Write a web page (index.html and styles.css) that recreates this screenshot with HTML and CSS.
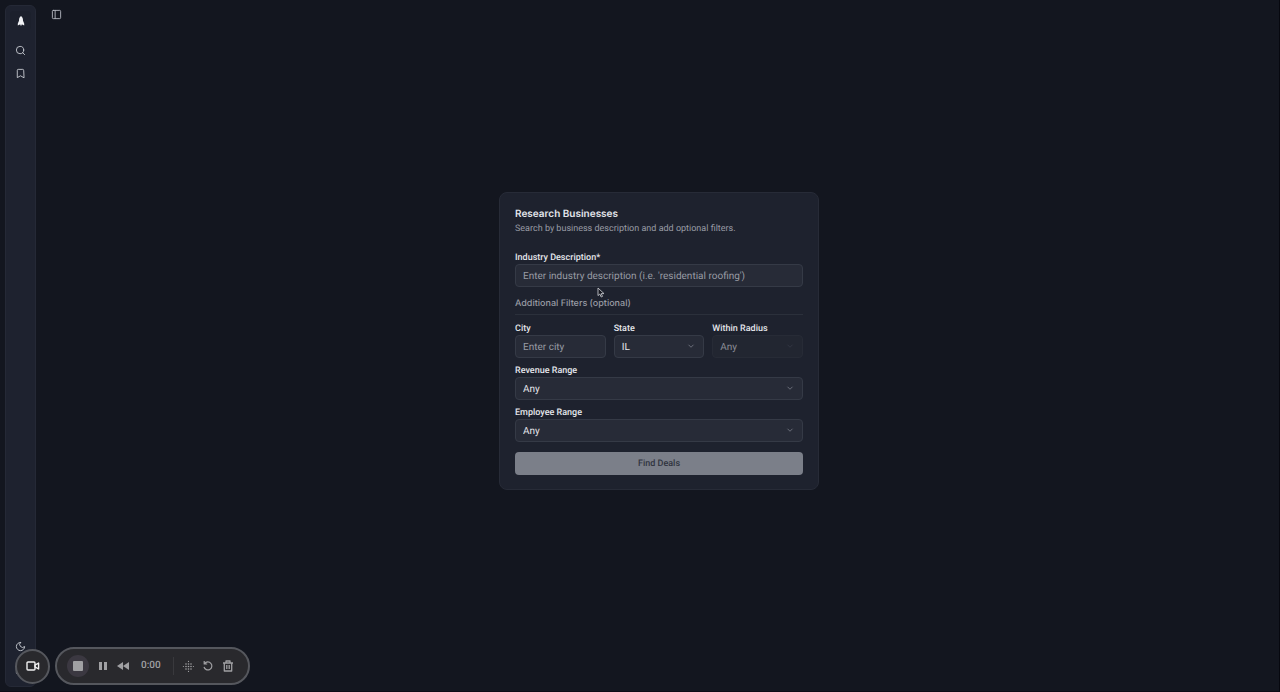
FILE: index.html
```html
<!DOCTYPE html>
<html lang="en">
<head>
  <meta charset="UTF-8" />
  <meta name="viewport" content="width=device-width, initial-scale=1.0"/>
  <title>Research Businesses</title>
  <link rel="stylesheet" href="styles.css">
</head>
<body>
  <div class="app">
    <aside class="sidebar">
      <nav class="sidebar-nav">
        <a href="#" class="brand" aria-label="Home">
          <svg width="12" height="12" viewBox="0 0 12 12" fill="currentColor">
            <path d="M6 1C4.4 2.2 4 3.8 4 5.8L2.8 8.6V10.4L4.8 9.6H5.4V10.6H6.6V9.6H7.2L9.2 10.4V8.6L8 5.8C8 3.8 7.6 2.2 6 1z"></path>
          </svg>
        </a>
        <a href="#" class="nav-link" aria-label="Search">
          <svg class="icon" width="11" height="11" viewBox="0 0 24 24">
            <circle cx="11" cy="11" r="8"></circle>
            <line x1="21" y1="21" x2="16.7" y2="16.7"></line>
          </svg>
        </a>
        <a href="#" class="nav-link" aria-label="Saved">
          <svg class="icon" width="11" height="11" viewBox="0 0 24 24">
            <path d="M19 21l-7-4-7 4V5a2 2 0 0 1 2-2h10a2 2 0 0 1 2 2z"></path>
          </svg>
        </a>
      </nav>
      <div class="sidebar-footer">
        <button class="nav-link" aria-label="Toggle theme">
          <svg class="icon" width="11" height="11" viewBox="0 0 24 24">
            <path d="M12 3a6 6 0 0 0 9 9 9 9 0 1 1-9-9z"></path>
          </svg>
        </button>
        <button class="nav-link" aria-label="Account">
          <svg class="icon" width="11" height="11" viewBox="0 0 24 24">
            <rect x="3" y="3" width="18" height="18" rx="2"></rect>
          </svg>
        </button>
      </div>
    </aside>

    <div class="content">
      <header class="topbar">
        <button class="toggle" aria-label="Toggle sidebar">
          <svg class="icon" width="11" height="11" viewBox="0 0 24 24">
            <rect x="3" y="3" width="18" height="18" rx="2"></rect>
            <line x1="9" y1="3" x2="9" y2="21"></line>
          </svg>
        </button>
      </header>

      <main class="main">
        <form class="card">
          <h1>Research Businesses</h1>
          <p class="subtitle">Search by business description and add optional filters.</p>

          <div class="field">
            <label for="industry">Industry Description*</label>
            <input type="text" id="industry" placeholder="Enter industry description (i.e. 'residential roofing')"/>
          </div>

          <h2>Additional Filters (optional)</h2>

          <div class="fields">
            <div class="row">
              <div class="field">
                <label for="city">City</label>
                <input type="text" id="city" placeholder="Enter city"/>
              </div>
              <div class="field">
                <label for="state">State</label>
                <div class="select">
                  <select id="state"><option>IL</option></select>
                  <svg class="chevron" width="10" height="10" viewBox="0 0 24 24"><polyline points="6 9 12 15 18 9"></polyline></svg>
                </div>
              </div>
              <div class="field">
                <label for="radius">Within Radius</label>
                <div class="select disabled">
                  <select id="radius" disabled><option>Any</option></select>
                  <svg class="chevron" width="10" height="10" viewBox="0 0 24 24"><polyline points="6 9 12 15 18 9"></polyline></svg>
                </div>
              </div>
            </div>
            <div class="field">
              <label for="revenue">Revenue Range</label>
              <div class="select">
                <select id="revenue"><option>Any</option></select>
                <svg class="chevron" width="10" height="10" viewBox="0 0 24 24"><polyline points="6 9 12 15 18 9"></polyline></svg>
              </div>
            </div>
            <div class="field">
              <label for="employees">Employee Range</label>
              <div class="select">
                <select id="employees"><option>Any</option></select>
                <svg class="chevron" width="10" height="10" viewBox="0 0 24 24"><polyline points="6 9 12 15 18 9"></polyline></svg>
              </div>
            </div>
          </div>

          <button type="submit" class="submit" disabled>Find Deals</button>
        </form>
      </main>
    </div>
  </div>

  <!-- Recorder controls -->
  <div class="recorder">
    <button class="camera" aria-label="Camera">
      <svg width="14" height="14" viewBox="0 0 14 14" fill="none" stroke="currentColor" stroke-width="1.4" stroke-linejoin="round">
        <rect x="1" y="3" width="8" height="8" rx="1"></rect>
        <path d="M9 6.2l3.6-2.2v6L9 7.8z"></path>
      </svg>
    </button>
    <div class="controls">
      <button class="stop" aria-label="Stop">
        <svg width="12" height="12" viewBox="0 0 12 12" fill="currentColor"><rect x="1" y="1" width="10" height="10" rx="1"></rect></svg>
      </button>
      <button aria-label="Pause">
        <svg width="12" height="12" viewBox="0 0 12 12" fill="currentColor">
          <rect x="2" y="2" width="3" height="8"></rect>
          <rect x="7" y="2" width="3" height="8"></rect>
        </svg>
      </button>
      <button aria-label="Rewind">
        <svg width="12" height="12" viewBox="0 0 12 12" fill="currentColor"><path d="M6 2v8L0 6zM12 2v8L6 6z"></path></svg>
      </button>
      <span class="time">0:00</span>
      <span class="separator"></span>
      <button aria-label="Effects">
        <svg width="12" height="12" viewBox="0 0 12 12" fill="currentColor">
          <circle cx="4" cy="4" r=".8"></circle>
          <circle cx="6.5" cy="4" r=".8"></circle>
          <circle cx="9" cy="4" r=".8"></circle>
          <circle cx="4" cy="6.5" r=".8"></circle>
          <circle cx="6.5" cy="6.5" r=".8"></circle>
          <circle cx="9" cy="6.5" r=".8"></circle>
          <circle cx="4" cy="9" r=".8"></circle>
          <circle cx="6.5" cy="9" r=".8"></circle>
          <circle cx="9" cy="9" r=".8"></circle>
          <circle cx="6.5" cy="1.4" r=".6"></circle>
          <circle cx="6.5" cy="11.4" r=".6"></circle>
          <circle cx="1.4" cy="6.5" r=".6"></circle>
          <circle cx="11.4" cy="6.5" r=".6"></circle>
        </svg>
      </button>
      <button aria-label="Restart">
        <svg width="12" height="12" viewBox="0 0 12 12" fill="none" stroke="currentColor" stroke-width="1.2" stroke-linejoin="round">
          <path d="M2.6 3.6A4 4 0 1 1 2 7M2.2 1v3h3"></path>
        </svg>
      </button>
      <button aria-label="Delete">
        <svg width="12" height="12" viewBox="0 0 12 12" fill="none" stroke="currentColor" stroke-width="1.3" stroke-linejoin="round">
          <path d="M1 3h10M4 3V1h4v2M2.3 3v8h7.4V3M4.8 5v4M7.2 5v4"></path>
        </svg>
      </button>
    </div>
  </div>

  <svg class="cursor" width="8" height="11" viewBox="0 0 8 11">
    <path d="M1 1v7.6l1.8-1.6 1.4 3 1.3-.6-1.3-2.8H7z" fill="#15171f" stroke="#c3c5cb" stroke-width=".9"></path>
  </svg>
</body>
</html>
```
FILE: styles.css
```css
* {
  box-sizing: border-box;
}
body {
  margin: 0;
  font-family: Roboto, 'Liberation Sans', sans-serif;
  font-size: 9px;
  line-height: 12px;
  text-rendering: geometricPrecision;
  background: #13161f;
  color: #e4e6eb;
}
button, input, select {
  font: inherit;
  color: inherit;
  text-rendering: inherit;
}
button {
  padding: 0;
  border: none;
  background: none;
}
svg {
  display: block;
}
.app {
  display: flex;
  min-height: 100vh;
  border-right: 1px solid #07080f;
  border-bottom: 1px solid #0d0b15;
}
.icon {
  fill: none;
  stroke: currentColor;
  stroke-width: 2;
  stroke-linecap: round;
  stroke-linejoin: round;
}

/* Sidebar */
.sidebar {
  display: flex;
  flex-direction: column;
  justify-content: space-between;
  width: 31px;
  margin: 5px 3px 4px 5px;
  padding: 5px 4px;
  background: #1e222f;
  border: 1px solid #252936;
  border-radius: 6px;
}
.sidebar-nav, .sidebar-footer {
  display: flex;
  flex-direction: column;
  align-items: center;
}
.brand, .nav-link {
  display: flex;
  align-items: center;
  justify-content: center;
  width: 21px;
  color: #c6c9d0;
}
.brand {
  height: 19px;
  margin-bottom: 9px;
  color: #f1f2f5;
  background: #1c202c;
  border-radius: 4px;
}
.nav-link {
  height: 23px;
}

/* Content */
.content {
  display: flex;
  flex: 1;
  flex-direction: column;
}
.topbar {
  height: 30px;
  padding: 9px 12px;
}
.toggle {
  color: #b5b7bf;
}
.main {
  display: flex;
  flex: 1;
  align-items: center;
  justify-content: center;
  padding-bottom: 39px;
}
.card {
  width: 320px;
  padding: 14px 15px;
  background: #1e222e;
  border: 1px solid #272b37;
  border-radius: 8px;
}
h1, h2, p {
  margin: 0;
}
h1, h2 {
  font-family: Inter, 'Liberation Sans', sans-serif;
}
h1 {
  margin-bottom: 2px;
  font-size: 10px;
  line-height: 14px;
  font-weight: 600;
}
.subtitle {
  margin-bottom: 16px;
  color: #989ba4;
}
h2 {
  margin: 11px 0 7px;
  padding-bottom: 4px;
  font-size: 9px;
  font-weight: 500;
  color: #989ba4;
  border-bottom: 1px solid #2b303b;
}
.fields {
  display: flex;
  flex-direction: column;
  gap: 6px;
}
.row {
  display: grid;
  grid-template-columns: repeat(3, 1fr);
  gap: 8px;
}
label {
  display: block;
  padding-top: 1px;
  font-weight: 500;
}
input, select {
  display: block;
  width: 100%;
  height: 23px;
  padding: 2px 7px 0;
  font-size: 10px;
  background: #272b37;
  border: 1px solid #353a46;
  border-radius: 4px;
  appearance: none;
}
input::placeholder {
  color: #989ba4;
  opacity: 1;
}
.select {
  position: relative;
}
.select select {
  opacity: 1;
}
.chevron {
  position: absolute;
  top: 6px;
  right: 8px;
  fill: none;
  stroke: #777b85;
  stroke-width: 2;
  pointer-events: none;
}
.disabled select {
  color: #8a8d96;
  background: #222631;
  border-color: #272b36;
}
.disabled .chevron {
  stroke: #353944;
}
.submit {
  width: 100%;
  height: 23px;
  margin-top: 10px;
  padding-top: 1px;
  font-weight: 500;
  color: #30343f;
  background: #7b7f89;
  border-radius: 4px;
}

/* Recorder */
.recorder {
  position: fixed;
  left: 15px;
  bottom: 7px;
  display: flex;
  align-items: center;
  gap: 5px;
  color: #a0a0a3;
}
.camera, .controls {
  background: #29292d;
  border: 2px solid #55575d;
}
.camera {
  display: flex;
  align-items: center;
  justify-content: center;
  width: 35px;
  height: 35px;
  border-radius: 50%;
  color: #eeeeef;
}
.controls {
  display: flex;
  align-items: center;
  gap: 8px;
  height: 38px;
  padding: 0 14px 0 10px;
  border-radius: 19px;
}
.stop {
  display: flex;
  align-items: center;
  justify-content: center;
  width: 22px;
  height: 22px;
  border-radius: 50%;
  background: #3b3841;
}
.time {
  margin: 0 4px;
  font-size: 10px;
  font-weight: 500;
}
.separator {
  width: 1px;
  height: 18px;
  background: #39393d;
}
.cursor {
  position: fixed;
  left: 597px;
  top: 287px;
}
```
